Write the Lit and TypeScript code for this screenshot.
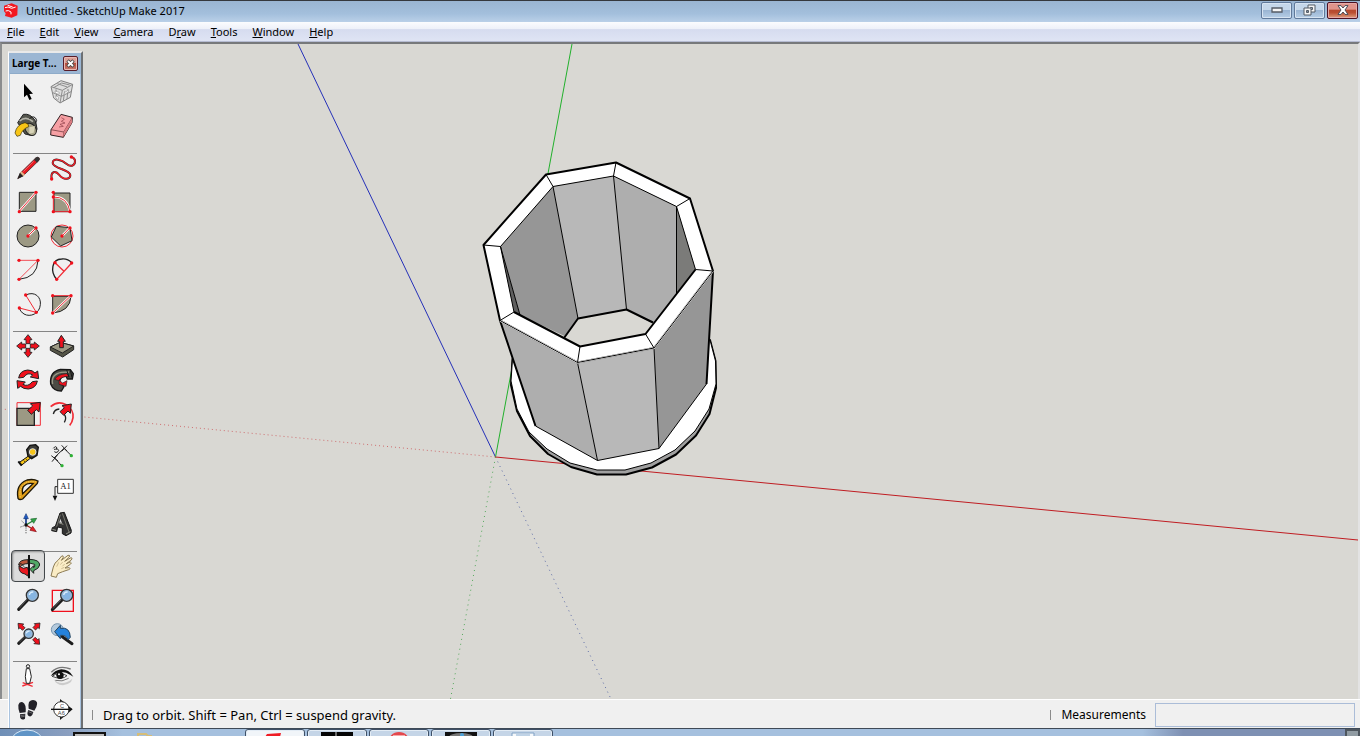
import { LitElement, html, css, svg } from "lit";
import { customElement, state } from "lit/decorators.js";
import { classMap } from "lit/directives/class-map.js";

interface Tool {
  name: string;
  cx: number;
  cy: number;
  art: unknown;
}

const dot = (x: number, y: number) => svg`<circle cx=${x} cy=${y} r="5" fill="#f0101c"/>`;
const arrow = (x: number, y: number, turn: number, fill = "#f0101c", size = 1) => svg`
  <path transform="translate(${x} ${y}) rotate(${turn}) scale(${size})" d="M0 -14 L12 1 H6 V13 H-6 V1 H-12Z"
    fill=${fill} stroke="#222" stroke-width="2.5" stroke-linejoin="round"/>`;
const lens = (x: number, y: number, r: number, hx: number, hy: number) => svg`
  <path d="M${x - r * 0.6} ${y + r * 0.6} L${hx} ${hy}" stroke="#1c1c1c" stroke-width="9" stroke-linecap="round"/>
  <path d="M${x - r * 0.9} ${y + r * 0.7} L${hx + 2} ${hy - 3}" stroke="#707070" stroke-width="2"/>
  <circle cx=${x} cy=${y} r=${r} fill="#7fb0de" stroke="#333" stroke-width="4"/>
  <circle cx=${x} cy=${y} r=${r - 4} fill="#86b5e2" stroke="#a9b9c8" stroke-width="2"/>
  <path d="M${x - r * 0.5} ${y - 1} Q${x - r * 0.4} ${y - r * 0.6} ${x + 3} ${y - r * 0.55}" stroke="#d9ecfc" stroke-width="4"/>`;

const groups: Tool[][] = [
  [
    { name: "Select", cx: 84, cy: 144, art: svg`
      <path d="M72 119 V160 L81 152 L88 168 L95 165 L88 150 L99 149Z" fill="#000"/>` },
    { name: "Make Component", cx: 186, cy: 144, art: svg`
      <path d="M153 128 L183 110 L218 121 L211 160 L180 177 L161 162Z" fill="#dedede" stroke="#808080" stroke-width="3"/>
      <path d="M153 128 L187 139 L218 121 M187 139 L180 177 M161 131 L185 117 L209 123 M168 136 L171 166 M156 145 L184 157 L213 143 M194 142 L190 171 M204 135 L201 165 M172 119 L202 129" stroke="#8d8d8d" stroke-width="3"/>
      <path d="M165 141 L178 145 L177 151 L166 148Z M193 146 L206 138 L205 144 L193 152Z M167 155 L176 160 L175 167 L168 163Z" fill="#fff" stroke="#999" stroke-width="2"/>` },
    { name: "Paint Bucket", cx: 84, cy: 246, art: svg`
      <path d="M53 236 L70 211 Q92 207 107 232 L111 255 Q108 272 92 274 L75 270Z" fill="#55564e" stroke="#222" stroke-width="3"/>
      <ellipse cx="92" cy="256" rx="15" ry="20" transform="rotate(-38 92 256)" fill="#a9a68a" stroke="#222" stroke-width="3"/>
      <path d="M59 231 Q78 214 99 233" stroke="#b4b3a8" stroke-width="5"/>
      <path d="M88 224 Q104 211 110 229 L106 238" stroke="#222" stroke-width="3"/>
      <path d="M75 236 Q50 241 45 267 L51 277 L61 274 Q67 255 86 248 Q89 240 75 236Z" fill="#f8c516" stroke="#3a2d00" stroke-width="2"/>
      <path d="M88 250 L105 246 L101 266 L88 269Z" fill="#d8d4b8"/>` },
    { name: "Eraser", cx: 186, cy: 246, art: svg`
      <path d="M153 257 L183 211 L217 220 L216 236 L190 280 L152 273Z" fill="#f6a0a4" stroke="#332224" stroke-width="3"/>
      <path d="M153 257 L191 264 L190 280 M191 264 L217 221" stroke="#5a2a2e" stroke-width="2"/>
      <path d="M191 265 L216 223 V236 L190 279Z" fill="#d97b80"/>
      <path d="M184 221 L193 226 L184 232 L195 237 L180 241 L190 247 L177 249" stroke="#8c3d45" stroke-width="2"/>` },
  ],
  [
    { name: "Line", cx: 84, cy: 372, art: svg`
      <path d="M53 404 L61 387 L107 342 Q113 337 118 342 L118 348 L70 395Z" fill="#e91920" stroke="#222" stroke-width="2"/>
      <path d="M53 404 L60 386 L71 396Z" fill="#222"/><path d="M60 386 L64 382 L75 392 L70 397Z" fill="#dbb58c"/>
      <path d="M102 347 L107 341 Q113 337 118 342 V348 L111 356Z" fill="#333"/>
      <path d="M70 383 L101 352" stroke="#f78286" stroke-width="2"/>` },
    { name: "Freehand", cx: 186, cy: 372, art: svg`
      <path d="M155 405 C151 382 166 378 178 393 C190 409 212 407 211 393 C210 376 159 374 158 357 C158 340 186 347 199 359 C213 371 226 365 225 350 Q224 342 213 338" stroke="#222" stroke-width="6"/>
      <path d="M155 405 C151 382 166 378 178 393 C190 409 212 407 211 393 C210 376 159 374 158 357 C158 340 186 347 199 359 C213 371 226 365 225 350 Q224 342 213 338" stroke="#ee2029" stroke-width="4"/>
      ${dot(155, 405)}${dot(214, 339)}` },
    { name: "Rectangle", cx: 84, cy: 474, art: svg`
      <path d="M58 445 H108 V502 H58Z" fill="#9c9984" stroke="#222" stroke-width="3"/>
      <path d="M58 502 L108 445" stroke="#fff" stroke-width="7"/><path d="M58 502 L108 445" stroke="#f12c36" stroke-width="3"/>
      ${dot(58, 503)}${dot(108, 445)}` },
    { name: "Rotated Rectangle", cx: 186, cy: 474, art: svg`
      <path d="M162 447 H210 V503 H162Z" fill="#9c9984" stroke="#222" stroke-width="3"/>
      <path d="M160 459 Q201 457 210 503" stroke="#fff" stroke-width="7"/>
      <path d="M160 445 V503 H210 Q202 458 160 459" stroke="#f12c36" stroke-width="3"/>
      ${dot(160, 445)}${dot(160, 459)}${dot(160, 503)}${dot(210, 503)}` },
    { name: "Circle", cx: 84, cy: 48, art: svg`
      <circle cx="84" cy="48" r="33" fill="#9c9984" stroke="#222" stroke-width="3"/>
      <path d="M84 48 L108 24" stroke="#fff" stroke-width="7"/><path d="M84 48 L108 24" stroke="#f12c36" stroke-width="3"/>
      ${dot(84, 48)}${dot(108, 24)}` },
    { name: "Polygon", cx: 186, cy: 48, art: svg`
      <circle cx="186" cy="48" r="33" stroke="#f12c36" stroke-width="3"/>
      <path d="M169 19 L210 23 L216 62 L182 78 L154 51Z" fill="#9c9984" stroke="#222" stroke-width="3"/>
      <path d="M186 48 L210 23" stroke="#fff" stroke-width="7"/><path d="M186 48 L210 23" stroke="#f12c36" stroke-width="3"/>
      ${dot(186, 48)}${dot(210, 24)}` },
    { name: "Arc", cx: 84, cy: 150, art: svg`
      <path d="M114 121 Q112 173 57 178" stroke="#222" stroke-width="3"/>
      <path d="M57 121 H114 L57 178" stroke="#f12c36" stroke-width="2.5"/>${dot(57, 121)}${dot(114, 121)}${dot(57, 178)}` },
    { name: "2 Point Arc", cx: 186, cy: 150, art: svg`
      <path d="M170 178 C150 155 155 118 185 117 Q203 115 215 128" stroke="#222" stroke-width="4"/>
      <path d="M215 129 L170 178 M165 128 L192 154" stroke="#f12c36" stroke-width="4"/>${dot(165, 128)}${dot(215, 129)}${dot(170, 178)}` },
    { name: "3 Point Arc", cx: 84, cy: 252, art: svg`
      <path d="M77 225 C105 212 124 232 121 254 C119 281 91 293 72 282 Q60 275 58 264" stroke="#222" stroke-width="3"/>
      <path d="M58 264 L109 277 L77 225" stroke="#f12c36" stroke-width="3"/>${dot(58, 264)}${dot(109, 277)}${dot(77, 225)}` },
    { name: "Pie", cx: 186, cy: 252, art: svg`
      <path d="M158 229 H213 Q210 275 158 279Z" fill="#9c9984" stroke="#222" stroke-width="3"/>
      <path d="M213 227 L158 279" stroke="#fff" stroke-width="7"/>
      <path d="M158 227 H213 L158 279" stroke="#f12c36" stroke-width="3"/>${dot(158, 227)}${dot(213, 227)}${dot(158, 279)}` },
  ],
  [
    { name: "Move", cx: 84, cy: 378, art: svg`
      ${arrow(84, 358, 0)}${arrow(104, 378, 90)}${arrow(84, 398, 180)}${arrow(64, 378, 270)}` },
    { name: "Push/Pull", cx: 186, cy: 378, art: svg`
      <path d="M151 381 L181 367 L221 378 V389 L188 411 L151 391Z" fill="#555547" stroke="#222" stroke-width="3"/>
      <path d="M151 381 L181 367 L221 378 L187 399Z" fill="#9c9984" stroke="#222" stroke-width="3"/>
      <path d="M184 346 L196 364 H190 V383 H179 V364 H173Z" fill="#f0101c" stroke="#222" stroke-width="3"/>` },
    { name: "Rotate", cx: 84, cy: 480, art: svg`
      <path d="M56 474 Q59 452 83 450 Q98 450 105 459 L113 453 L116 476 L91 471 L98 465 Q83 455 71 472Z M112 483 Q109 504 85 507 Q69 507 62 499 L53 505 L51 482 L76 486 L69 493 Q84 502 97 485Z" fill="#f0101c" stroke="#222" stroke-width="3"/>` },
    { name: "Follow Me", cx: 186, cy: 480, art: svg`
      <path d="M152 492 Q148 455 181 448 L211 449 L220 461 L217 477 L202 477 L198 468 Q177 470 180 488 L192 500 L184 513 Q160 513 152 492Z" fill="#4b4b44" stroke="#171717" stroke-width="4"/>
      <path d="M158 492 Q152 463 184 457 L207 456" stroke="#999987" stroke-width="4"/>
      <path d="M164 478 Q174 462 201 461 L207 470 Q185 468 176 482Z M177 481 L188 489 L201 482 L198 499 L177 493Z" fill="#f0101c" stroke="#222" stroke-width="2"/>
      <path d="M200 449 L207 472 M211 450 L216 473" stroke="#171717" stroke-width="3"/>` },
    { name: "Scale", cx: 84, cy: 582, art: svg`
      <path d="M51 548 H121 V616 H51Z" stroke="#f12c36" stroke-width="3"/>
      <path d="M51 565 H103 V616 H51Z" fill="#9c9984" stroke="#222" stroke-width="4"/>
      <path d="M121 547 L117 576 L109 569 L94 583 L83 571 L98 558 L91 551Z" fill="#f0101c" stroke="#222" stroke-width="3"/>` },
    { name: "Offset", cx: 186, cy: 582, art: svg`
      <path d="M152 560 C182 533 223 561 219 593 Q217 608 209 616" stroke="#f12c36" stroke-width="5"/>
      <path d="M160 582 Q163 568 178 567 M193 583 Q201 594 193 607" stroke="#222" stroke-width="4"/>
      <path d="M214 552 L211 580 L204 573 L191 586 L180 575 L193 563 L186 557Z" fill="#f0101c" stroke="#222" stroke-width="3"/>` },
  ],
  [
    { name: "Tape Measure", cx: 84, cy: 78, art: svg`
      <path d="M80 59 L90 46 L107 44 L115 52 L111 76 L95 86 L84 79Z" fill="#3c3c38" stroke="#111" stroke-width="4"/>
      <circle cx="98" cy="66" r="10" fill="#f6c51c" stroke="#ddd" stroke-width="3"/>
      <path d="M84 79 L91 85 L64 106 L57 98Z" fill="#f8c516" stroke="#111" stroke-width="3"/>
      <path d="M55 94 L65 107" stroke="#111" stroke-width="6"/><path d="M71 91 L75 96 M78 86 L82 91" stroke="#111" stroke-width="2"/>` },
    { name: "Dimensions", cx: 186, cy: 78, art: svg`
      <path d="M162 84 L192 55 M164 84 L184 106 M192 55 L214 77 M154 77 L174 93 M156 95 L172 75 M185 46 L201 63 M185 64 L201 47" stroke="#222" stroke-width="3"/>
      <path d="M160 55 Q168 45 171 55 Q166 59 162 58 M168 57 Q180 58 174 65 Q168 70 163 65" stroke="#222" stroke-width="3"/>
      <circle cx="186" cy="107" r="5" fill="#2eb135"/><circle cx="214" cy="77" r="5" fill="#2eb135"/>` },
    { name: "Protractor", cx: 84, cy: 180, art: svg`
      <path d="M54 205 Q46 164 81 150 Q101 146 114 153 L112 160 L68 207 Q58 211 54 205Z M68 191 L99 161 Q82 158 72 168 Q65 176 68 191Z" fill="#df9d19" fill-rule="evenodd" stroke="#1e1707" stroke-width="4"/>
      <path d="M61 202 Q55 169 83 156 Q98 152 108 156" stroke="#f8d25c" stroke-width="3" stroke-dasharray="4 3"/>` },
    { name: "Text", cx: 186, cy: 180, art: svg`
      <path d="M165 197 V170 H175" stroke="#222" stroke-width="3"/><path d="M158 197 H172 L165 213Z" fill="#111"/>
      <path d="M173 148 H220 V190 H173Z" fill="#fff" stroke="#333" stroke-width="3"/>
      <text x="197" y="178" text-anchor="middle" class="glyph">A1</text>` },
    { name: "Axes", cx: 84, cy: 282, art: svg`
      <path d="M78 285 L64 272 M78 285 L59 292 M78 285 V313" stroke="#666" stroke-width="3" stroke-dasharray="4 3"/>
      <path d="M78 285 V262" stroke="#153b8b" stroke-width="5"/><path d="M78 251 L85 266 H71Z" fill="#1d58c5" stroke="#163b7a" stroke-width="2"/>
      <path d="M78 285 L98 273" stroke="#267b36" stroke-width="4"/><path d="M110 265 L101 280 L92 267Z" fill="#30a747" stroke="#1b642a" stroke-width="2"/>
      <path d="M78 285 L98 297" stroke="#a31515" stroke-width="4"/><path d="M109 305 L90 301 L98 289Z" fill="#e81e26" stroke="#7a1115" stroke-width="2"/>
      <circle cx="78" cy="285" r="5" fill="#111"/>` },
    { name: "3D Text", cx: 186, cy: 282, art: svg`
      <path d="M180 249 L193 247 L214 301 L213 309 L198 317 L187 311 V294 L173 291 L170 305 L155 302 L157 293 L166 289Z" fill="#333" stroke="#171717" stroke-width="3"/>
      <path d="M187 250 L207 306 M181 254 L170 290" stroke="#77776e" stroke-width="3"/>
      <path d="M176 278 L190 283 M157 298 L168 301 M198 312 L211 305" stroke="#96968a" stroke-width="3"/>
      <path d="M181 266 L186 279 L178 277Z" fill="#ddd"/>` },
  ],
  [
    { name: "Orbit", cx: 84, cy: 408, art: svg`
      <path d="M84 389 Q57 389 56 405 L61 410 Q66 401 84 401Z" fill="#bd563a" stroke="#222" stroke-width="3"/>
      <path d="M88 388 Q119 389 119 405 Q117 416 101 422 V430 L90 418 L101 407 V413 Q106 409 104 403 L88 399Z" fill="#51a866" stroke="#222" stroke-width="3"/>
      <path d="M57 408 L70 415 L82 412 L87 426 L83 438 L75 432 Q55 429 57 408Z" fill="#e91920" stroke="#222" stroke-width="3"/>
      <path d="M56 407 L63 400 L72 410" stroke="#222" stroke-width="3"/>
      <path d="M87 375 V445" stroke="#111" stroke-width="6"/>` },
    { name: "Pan", cx: 186, cy: 408, art: svg`
      <path d="M153 438 L160 411 Q163 398 174 391 L185 378 Q190 375 190 382 L184 391 L204 376 Q211 374 208 381 L194 394 L213 383 Q219 383 214 390 L199 401 L211 396 Q217 398 211 403 L195 414 L208 413 Q214 416 206 419 L188 425 L173 431 L169 442Z" fill="#faecc5" stroke="#8c7b54" stroke-width="3"/>
      <path d="M176 397 L170 410 M188 396 L181 404 M194 402 L187 409 M193 412 L184 416" stroke="#b9a77c" stroke-width="2"/>` },
    { name: "Zoom", cx: 84, cy: 60, art: lens(97, 46, 18, 56, 88) },
    { name: "Zoom Window", cx: 186, cy: 60, art: svg`
      <path d="M157 31 H220 V94 H157Z" stroke="#f0101c" stroke-width="4"/>${lens(200, 46, 18, 157, 89)}` },
    { name: "Zoom Extents", cx: 84, cy: 162, art: svg`
      ${arrow(63, 139, -45, "#f0101c", 0.9)}${arrow(111, 138, 45, "#f0101c", 0.9)}${arrow(110, 184, 135, "#f0101c", 0.9)}${lens(86, 161, 14, 56, 190)}` },
    { name: "Previous", cx: 186, cy: 162, art: svg`
      <circle cx="172" cy="149" r="18" fill="#b4cadd" stroke="#7896b0" stroke-width="3"/>
      <path d="M187 170 L216 191" stroke="#1c1c1c" stroke-width="9" stroke-linecap="round"/>
      <path d="M164 155 L181 136 V145 Q210 140 211 172 L203 180 Q201 164 181 166 V176Z" fill="#2582db" stroke="#24445f" stroke-width="3"/>` },
  ],
  [
    { name: "Position Camera", cx: 84, cy: 288, art: svg`
      <path d="M67 318 L99 307 M68 308 L98 319" stroke="#f12c36" stroke-width="4"/>
      <circle cx="84" cy="259" r="5" fill="#eee" stroke="#222" stroke-width="3"/>
      <path d="M79 266 H89 L94 290 L89 310 H79 L76 290Z" fill="#fff" stroke="#222" stroke-width="3"/>` },
    { name: "Look Around", cx: 186, cy: 288, art: svg`
      <path d="M160 296 Q184 322 217 296 L213 306 Q190 324 168 308Z" fill="#ccc"/>
      <path d="M154 277 Q176 254 212 267" stroke="#777" stroke-width="4"/>
      <path d="M152 288 Q164 270 184 268 Q207 268 220 290 L210 284 Q194 273 178 277Z" fill="#111"/>
      <path d="M156 289 Q176 274 201 287 Q187 301 156 289Z" fill="#fff" stroke="#444" stroke-width="3"/>
      <circle cx="180" cy="286" r="11" fill="#111"/><circle cx="177" cy="283" r="3" fill="#fff"/>
      <path d="M166 301 Q186 307 206 295" stroke="#777" stroke-width="3"/>` },
    { name: "Walk", cx: 84, cy: 390, art: svg`
      <path d="M55 375 Q58 364 68 367 Q79 372 77 397 L59 399 Q54 388 55 375Z M60 403 L76 401 L75 416 Q64 423 60 412Z M87 366 Q95 357 107 362 Q118 369 103 392 L86 386 Q84 375 87 366Z M85 390 L100 396 Q96 413 86 408 Q79 404 85 390Z" fill="#222128"/>
      <path d="M61 407 L74 405 M61 411 L74 409 M85 395 L98 400" stroke="#888" stroke-width="2"/>` },
    { name: "Section Plane", cx: 186, cy: 390, art: svg`
      <path d="M180 357 L218 388 L180 420Z" fill="#161616"/>
      <circle cx="184" cy="388" r="23" fill="#fff" stroke="#333" stroke-width="3"/>
      <path d="M153 388 H216" stroke="#111" stroke-width="4"/>
      <text x="186" y="384" text-anchor="middle" class="tiny">C</text>
      <text x="184" y="404" text-anchor="middle" class="tiny">A6</text>` },
  ],
];

@customElement("tool-palette")
class ToolPalette extends LitElement {
  @state() active = "Orbit";

  static styles = css`
    :host { display: flex; flex-direction: column; box-sizing: border-box; width: 75px; overflow: hidden;
      background: #f0f0f0; border-left: 1px solid #fff; border-top: 2px solid #e9e9e9; border-right: 2px solid #6d7073;
      font-family: "Noto Sans", "Open Sans", sans-serif; }
    .body { flex: 1; border: 1px solid #a9c3df; border-width: 0 1px; border-top: 1px solid #8eabc9; padding-left: 1px; min-height: 0; overflow: hidden; }
    .head { display: flex; align-items: center; justify-content: space-between; height: 20px; padding: 0 3px; background: #9bb6d3; font-size: 10px; font-weight: 700; color: #000; white-space: nowrap; }
    .close { width: 15px; height: 15px; padding: 0; display: grid; place-items: center; border: 1px solid #581d29; border-radius: 2px;
      background: linear-gradient(#dda097 45%, #b64e3d 50%, #c87c70); box-shadow: inset 0 0 0 1px #e9bab4; }
    .group { display: grid; grid-template-columns: 34px 34px; row-gap: 2px; margin-top: 10px;
      background: linear-gradient(#858585, #858585) 2px 1px / 64px 1px no-repeat; }
    .group:first-child { margin-top: 2px; background: none; }
    .tool { display: grid; place-items: center; box-sizing: border-box; height: 32px; width: 34px; padding: 0; border: 2px solid transparent; border-radius: 4px; background: none; }
    .tool.active { border: 1px solid #44484b; background: #dcdcdc; box-shadow: inset 1px 1px 2px #8b8b8b; }
    .icon { width: 26px; height: 26px; display: block; fill: none; overflow: visible; }
    .glyph { font: 26px "Liberation Serif", serif; fill: #222; }
    .tiny { font: 17px "Liberation Sans", sans-serif; fill: #444; }
  `;

  render() {
    return html`
      <div class="head"><span>Large T...</span>
        <button class="close" aria-label="Close toolbar">
          <svg width="9" height="9" viewBox="0 0 9 9" fill="none"><path d="M1.5 1.5 L7.5 7.5 M7.5 1.5 L1.5 7.5" stroke="#444" stroke-width="3.4"/><path d="M2 2 L7 7 M7 2 L2 7" stroke="#fff" stroke-width="1.8"/></svg>
        </button>
      </div>
      <div class="body">
        ${groups.map((g) => html`<div class="group">${g.map((t) => html`
          <button class=${classMap({ tool: true, active: t.name === this.active })} aria-label=${t.name} @click=${() => (this.active = t.name)}>
            <svg class="icon" viewBox="${t.cx - 39} ${t.cy - 39} 78 78">${t.art}</svg>
          </button>`)}</div>`)}
      </div>`;
  }
}

@customElement("model-view")
class ModelView extends LitElement {
  static styles = css`
    :host { display: block; overflow: hidden; background: #d9d8d3; }
    .scene { display: block; width: 100%; height: 100%; fill: none; stroke-linejoin: round; }
    .edge { stroke: #000; stroke-width: 2; }
    .thin { stroke: #000; stroke-width: 1; }
  `;

  render() {
    return html`<svg class="scene" viewBox="2 44 1356 655" preserveAspectRatio="xMinYMin slice" role="img" aria-label="Model">
      <path d="M298 44 L495.500 457" stroke="#2530b8" stroke-width="1"/>
      <path d="M495.500 457 L611 699" stroke="#5f6ea8" stroke-width="1" stroke-dasharray="1 4"/>
      <path d="M572 44 L495.500 457" stroke="#22b02c" stroke-width="1"/>
      <path d="M495.500 457 L450.500 699" stroke="#53a85a" stroke-width="1" stroke-dasharray="1 4"/>
      <path d="M495.500 457 L1358 540" stroke="#c01d22" stroke-width="1"/>
      <path d="M495.500 457 L2 409" stroke="#cf6e70" stroke-width="1" stroke-dasharray="1 3"/>

      <path class="edge" fill="#a0a0a0" d="M512.500 359 L511 385 L517 411 L530 436 L548 454 L571 467 L597 474.500 H626 L652 467.500 L676 454.500 L696 435.500 L709.500 414 L716 388 L715.500 361 L710 340Z"/>
      <path class="thin" fill="#fff" d="M512.500 359 L511 381 L517 409 L529 432 L547 449 L570 463 L597 470 H625 L651 463 L675 450 L695 431 L709 409 L716 384 L715.500 361 L710 340Z"/>

      <path fill="#aeaeae" d="M500 320.500 L577.500 362.500 L597.500 460.500 L535.500 426Z"/>
      <path fill="#b8b8b8" d="M577.500 362.500 L654 348 L659 448.500 L597.500 460.500Z"/>
      <path fill="#969696" d="M654 348 L713 271 L706.500 384 L659 448.500Z"/>
      <path class="thin" d="M577.500 362.500 L597.500 460.500 M654 348 L659 448.500 M535.500 426 L597.500 460.500 L659 448.500 L706.500 384"/>
      <path class="edge" d="M500 320.500 L535.500 426 M713 271 L706.500 384"/>

      <path class="edge" fill="#fff" d="M546 174.500 L616 162.500 L690 198.500 L713 271 L654 348 L577.500 362.500 L500 320.500 L483.500 245Z"/>
      <path stroke="#fff" stroke-width="2" d="M500 320.500 L577.500 362.500 L654 348 L713 271"/>
      <path class="thin" d="M500 320.500 L577.500 362.500 L654 348 L713 271"/>

      <path fill="#d9d8d3" d="M553 186.500 L613.500 176 L676.500 206.500 L695.500 269.500 L645.500 334 L580 346.500 L514 312 L500.500 246.500Z"/>
      <path fill="#5f5f5f" d="M500.500 246.500 L520 315 L514 312Z"/>
      <path fill="#969696" d="M500.500 246.500 L553 186.500 L578 318.500 L564.500 336 L520 315Z"/>
      <path fill="#b8b8b8" d="M553 186.500 L613.500 176 L626.500 309.500 L578 318.500Z"/>
      <path fill="#aeaeae" d="M613.500 176 L676.500 206.500 V294 L653 324 L626.500 309.500Z"/>
      <path fill="#7b7b79" d="M676.500 206.500 L695.500 269.500 L676.500 294Z"/>
      <path class="thin" d="M500.500 246.500 L520 315 M553 186.500 L578 318.500 M613.500 176 L626.500 309.500 M676.500 206.500 V294"/>
      <path class="edge" d="M564 338 L578 318.500 L626.500 309.500 L653 322.500"/>
      <path class="thin" d="M514 312 L500.500 246.500 L553 186.500 L613.500 176 L676.500 206.500 L695.500 269.500"/>
      <path class="edge" d="M514 312 L580 346.500 L645.500 334 L695.500 269.500"/>
      <path class="thin" d="M546 174.500 L553 186.500 M616 162.500 L613.500 176 M690 198.500 L676.500 206.500 M713 271 L695.500 269.500 M654 348 L645.500 334 M577.500 362.500 L580 346.500 M500 320.500 L514 312 M483.500 245 L500.500 246.500"/>
    </svg>`;
  }
}

@customElement("app-root")
class AppRoot extends LitElement {
  static styles = css`
    :host { display: flex; flex-direction: column; position: relative; height: 100vh; overflow: hidden; background: #f0f0f0; color: #000;
      font-family: "Noto Sans", "Open Sans", sans-serif; font-size: 11px; }
    button { font: inherit; color: inherit; }
    .title { display: flex; align-items: center; box-sizing: border-box; height: 22px; padding: 0 2px 3px 3px; gap: 8px; border-top: 1px solid #35383d;
      background: linear-gradient(#9ab5d2, #a3bfdc 60%, #bad0e8); }
    .name { flex: 1; }
    .controls { display: flex; gap: 2px; }
    .win { display: grid; place-items: center; box-sizing: border-box; width: 31px; height: 17px; padding: 0; border: 1px solid #60799a; border-radius: 2px;
      background: linear-gradient(#c5d7ea 45%, #9ab5d3 50%, #b6cee6); box-shadow: inset 0 0 0 1px #d7e4f2; }
    .win.exit { border-color: #4d1122; background: linear-gradient(#e0948b 42%, #b5482d 46%, #bb4f32 65%, #dda07f); box-shadow: inset 0 0 0 1px #e6aaa7; }
    .menu { display: flex; align-items: center; gap: 1px; box-sizing: border-box; height: 20px; border-bottom: 1px solid #b6bcd2;
      background: linear-gradient(#fbfcfe, #eef1f9 35%, #d6dcef 40%, #dfe4f4); }
    .item { border: 0; background: none; padding: 0 7px; line-height: 18px; }
    .frame { flex: 1; min-height: 0; display: flex; border: solid; border-width: 2px 2px 0; border-color: #77797b #e3e3e3 #fff #8b8d8e; }
    model-view { flex: 1; min-width: 0; }
    .status { display: flex; align-items: center; box-sizing: border-box; height: 29px; padding: 2px 5px 0 92px; border-top: 1px solid #fff; font-size: 12px; }
    .message { flex: 1; font-size: 13px; }
    .message, .label { border-left: 1px solid #8b8b8b; padding-left: 10px; line-height: 10px; }
    .value { box-sizing: border-box; width: 200px; height: 24px; margin-left: 9px; padding: 0 4px; border: 1px solid #abbdd8; background: #f0f0f0; font: inherit; }
    .taskbar { display: flex; box-sizing: border-box; height: 8px; overflow: hidden; border-top: 1px solid #3f4a57;
      background: linear-gradient(90deg, #6f8fb7, #8a9fc0 5%, #a5c0de 9%, #a5c0de 84%, #7e90b3 87%, #7e90b3); }
    .pinned { width: 245px; height: 8px; flex: none; }
    .task { box-sizing: border-box; width: 60px; height: 16px; margin-right: 2px; padding: 0; border: 1px solid #3f5067; border-radius: 3px; background: #c5d5e7; box-shadow: inset 0 0 0 1px #e3ecf5; flex: none; }
    .task.current { background: #f1f5f9; }
    .task svg { display: block; margin: 0 auto; }
    .show { margin-left: auto; width: 15px; height: 16px; padding: 0; border: 2px solid #4e565e; background: #919ca3; }
    tool-palette { position: absolute; left: 8px; top: 51px; bottom: 8px; }
  `;

  menus = ["File", "Edit", "View", "Camera", "Draw", "Tools", "Window", "Help"];
  taskArt = [
    svg`<path d="M18 7 L20 4 L34 3 L33 7Z" fill="#ef1c25"/>`,
    svg`<path d="M12 2 H44 V7 H12Z" fill="#050505"/><path d="M27 2 V7" stroke="#ccc"/>`,
    svg`<circle cx="28" cy="13" r="11" fill="#e4484d"/><path d="M22 6 H34" stroke="#f3abab" stroke-width="2"/>`,
    svg`<path d="M12 2 H44 V7 H12Z" fill="#111"/><ellipse cx="28" cy="7" rx="12" ry="4" fill="#777"/><circle cx="29" cy="5" r="2" fill="#4da2d8"/>`,
    svg`<path d="M17 8 V3 H39 V8" fill="#f5f8fb" stroke="#7fa0c4"/><path d="M21 5 H35" stroke="#8aaed2"/>`,
  ];

  render() {
    return html`
      <header class="title">
        <svg width="15" height="15" viewBox="0 0 45 45" fill="none">
          <path d="M3 8 L26 1 L44 8 L43 37 L26 44 L6 39 L8 31 L3 25Z" fill="#f31820"/>
          <path d="M6 14 Q14 9 26 16 L38 12 M8 24 Q16 20 24 27 V34 M14 7 L29 12" stroke="#fff" stroke-width="3"/>
        </svg>
        <span class="name">Untitled - SketchUp Make 2017</span>
        <div class="controls">
          <button class="win" aria-label="Minimize"><svg width="12" height="6" viewBox="0 0 12 6"><path d="M1 1 H11 V5 H1Z" fill="#f4f4f4" stroke="#555c66" stroke-width="1.300"/></svg></button>
          <button class="win" aria-label="Restore"><svg width="13" height="12" viewBox="0 0 13 12" fill-rule="evenodd"><path d="M5 1 H12 V8 H5Z M7.500 3.500 V5.500 H9.500 V3.500Z" fill="#f4f4f4" stroke="#555c66"/><path d="M1 4 H8 V11 H1Z M3.500 6.500 V8.500 H5.500 V6.500Z" fill="#f4f4f4" stroke="#555c66"/></svg></button>
          <button class="win exit" aria-label="Close"><svg width="12" height="10" viewBox="0 0 12 10"><path d="M1 .6 H4 L6 3 L8 .6 H11 L8 5 L11 9.400 H8 L6 7 L4 9.400 H1 L4 5Z" fill="#fff" stroke="#4a4a55"/></svg></button>
        </div>
      </header>
      <nav class="menu">${this.menus.map((m) => {
        const at = m === "Draw" ? 1 : 0;
        return html`<button class="item">${m.slice(0, at)}<u>${m[at]}</u>${m.slice(at + 1)}</button>`;
      })}</nav>
      <main class="frame"><model-view></model-view></main>
      <footer class="status">
        <span class="message">Drag to orbit. Shift = Pan, Ctrl = suspend gravity.</span>
        <label class="label" for="measure">Measurements</label>
        <input class="value" id="measure" type="text" />
      </footer>
      <div class="taskbar">
        <svg class="pinned" width="245" height="8" viewBox="0 0 245 8">
          <ellipse cx="27" cy="13" rx="16" ry="12" fill="#5f94c6" stroke="#d5e7f6"/>
          <path d="M74 4 H105 V9 H74Z" fill="#bbb" stroke="#111" stroke-width="2"/>
          <path d="M138 8 V5 H146 L148 7 H152" stroke="#d6bd78" stroke-width="2" fill="none"/>
        </svg>
        ${this.taskArt.map((a, i) => html`<button class=${classMap({ task: true, current: i === 0 })} aria-label="Window ${i + 1}"><svg width="56" height="14" viewBox="0 0 56 14">${a}</svg></button>`)}
        <button class="show" aria-label="Show desktop"></button>
      </div>
      <tool-palette></tool-palette>`;
  }
}
